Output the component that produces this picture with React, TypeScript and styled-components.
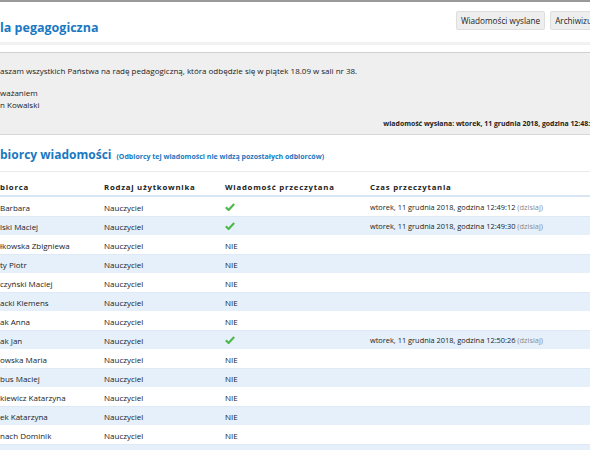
import React from 'react';
import styled, { createGlobalStyle } from 'styled-components';

const GlobalStyle = createGlobalStyle`
  html, body {
    margin: 0;
    padding: 0;
    background: #fff;
    overflow: hidden;
  }
  body {
    font-family: "Open Sans", "DejaVu Sans", sans-serif;
    color: #222;
  }
`;

const Page = styled.div`
  width: 590px;
  border-top: 2px solid #9a9a9a;
`;

const Header = styled.div`
  display: flex;
  justify-content: space-between;
  align-items: center;
  height: 40px;
  border-bottom: 3px solid #f2f2f2;
  margin-bottom: 7px;
`;

const Title = styled.h1`
  margin: 11px 0 0 0;
  font-size: 12.5px;
  font-weight: 700;
  color: #1a78c2;
`;

const Buttons = styled.div`
  display: flex;
  gap: 5px;
  margin-right: -9px;
  margin-top: -4px;
`;

const Button = styled.button`
  font-family: inherit;
  font-size: 8.2px;
  color: #222;
  background: #eeeeee;
  border: 1px solid #dedede;
  border-radius: 2px;
  height: 19px;
  padding: 0 4px;
  white-space: nowrap;
`;

const Message = styled.div`
  background: #efefef;
  border-top: 1px solid #d0d0d0;
  border-bottom: 1px solid #d8d8d8;
  padding: 12px 0 4px 0;
  font-size: 8px;
  line-height: 12px;
`;

const Paragraph = styled.p`
  margin: 0 0 10px 0;
`;

const Sent = styled.div`
  text-align: right;
  font-size: 6.9px;
  font-weight: 700;
  margin-top: 7px;
  margin-right: -8px;
  white-space: nowrap;
`;

const SectionTitle = styled.h2`
  display: flex;
  align-items: baseline;
  gap: 5px;
  margin: 0;
  padding: 11px 0 8px 0;
  font-size: 12px;
  font-weight: 700;
  color: #1a78c2;
  border-bottom: 1px solid #eaeaea;
`;

const Note = styled.span`
  font-size: 7px;
`;

const Table = styled.div`
  margin-top: 5px;
`;

const Row = styled.div<{ $alt?: boolean }>`
  display: grid;
  grid-template-columns: 104px 121px 145px 1fr;
  align-items: center;
  height: 19px;
  font-size: 8px;
  white-space: nowrap;
  background: ${({ $alt }) => ($alt ? '#e6f0fa' : '#fff')};
  border-top: 1px solid ${({ $alt }) => ($alt ? '#dde9f5' : 'transparent')};
  box-sizing: border-box;
`;

const HeadRow = styled(Row)`
  height: 20px;
  font-weight: 700;
  letter-spacing: 0.75px;
  font-size: 7.8px;
  border-bottom: 2px solid #d8e6f3;
`;

const When = styled.span`
  font-size: 7.4px;
`;

const Today = styled.span`
  color: #8a8a8a;
`;

const Check = () => (
  <svg width="10" height="8" viewBox="0 0 11 9">
    <path d="M0.8 4.8 L3.9 7.8 L10.2 1.2" fill="none" stroke="#4cb848" strokeWidth="2.4" strokeLinejoin="round" />
  </svg>
);

type Recipient = { name: string; read?: string };

const recipients: Recipient[] = [
  { name: 'Barbara', read: '12:49:12' },
  { name: 'lski Maciej', read: '12:49:30' },
  { name: 'łkowska Zbigniewa' },
  { name: 'ty Piotr' },
  { name: 'czyński Maciej' },
  { name: 'acki Klemens' },
  { name: 'ak Anna' },
  { name: 'ak Jan', read: '12:50:26' },
  { name: 'owska Maria' },
  { name: 'bus Maciej' },
  { name: 'kiewicz Katarzyna' },
  { name: 'ek Katarzyna' },
  { name: 'nach Dominik' },
  { name: 'ak Ewa' },
];

export default function App() {
  return (
    <>
      <GlobalStyle />
      <Page>
        <Header>
          <Title>la pegagogiczna</Title>
          <Buttons>
            <Button>Wiadomości wyslane</Button>
            <Button>Archiwizuj</Button>
          </Buttons>
        </Header>
        <Message>
          <Paragraph>aszam wszystkich Państwa na radę pedagogiczną, która odbędzie się w piątek 18.09 w sali nr 38.</Paragraph>
          <div>ważaniem</div>
          <div>n Kowalski</div>
          <Sent>wiadomość wysłana: wtorek, 11 grudnia 2018, godzina 12:48:54</Sent>
        </Message>
        <SectionTitle>
          biorcy wiadomości
          <Note>(Odbiorcy tej wiadomości nie widzą pozostałych odbiorców)</Note>
        </SectionTitle>
        <Table>
          <HeadRow>
            <span>biorca</span>
            <span>Rodzaj użytkownika</span>
            <span>Wiadomość przeczytana</span>
            <span>Czas przeczytania</span>
          </HeadRow>
          {recipients.map((r, i) => (
            <Row key={i} $alt={i % 2 === 1}>
              <span>{r.name}</span>
              <span>Nauczyciel</span>
              <span>{r.read ? <Check /> : 'NIE'}</span>
              <When>
                {r.read && (
                  <>
                    wtorek, 11 grudnia 2018, godzina {r.read} <Today>(dzisiaj)</Today>
                  </>
                )}
              </When>
            </Row>
          ))}
        </Table>
      </Page>
    </>
  );
}
